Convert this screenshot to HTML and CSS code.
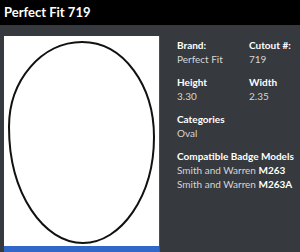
FILE: index.html
```html
<!DOCTYPE html>
<html lang="en">
<head>
    <meta charset="UTF-8">
    <title>Perfect Fit 719</title>
    <link rel="stylesheet" href="styles.css">
</head>
<body>
    <header class="title-bar">Perfect Fit 719</header>

    <main class="content">
        <div class="preview">
            <svg class="shape" viewBox="0 0 155 210" width="155" height="210">
                <path d="M78,6 C120,6 150,50 150,101 C150,160 117,207 79,207 C40,207 5,158 5,91 C5,44 38,6 78,6 Z"
                      fill="none" stroke="#111" stroke-width="2"/>
            </svg>
        </div>

        <div class="details">
            <div class="field">
                <div class="label">Brand:</div>
                <div class="value">Perfect Fit</div>
            </div>
            <div class="field">
                <div class="label">Cutout #:</div>
                <div class="value">719</div>
            </div>
            <div class="field">
                <div class="label">Height</div>
                <div class="value">3.30</div>
            </div>
            <div class="field">
                <div class="label">Width</div>
                <div class="value">2.35</div>
            </div>
            <div class="field wide">
                <div class="label">Categories</div>
                <div class="value">Oval</div>
            </div>
            <div class="field wide">
                <div class="label">Compatible Badge Models</div>
                <div class="value">Smith and Warren <b>M263</b></div>
                <div class="value">Smith and Warren <b>M263A</b></div>
            </div>
        </div>
    </main>
</body>
</html>
```

FILE: styles.css
```css
body {
    margin: 0;
    background-color: #36393e;
    font-family: Lato, 'Open Sans', sans-serif;
    color: #d4d6d9;
    height: 252px;
    overflow: hidden;
}

.title-bar {
    background-color: #000;
    color: #fff;
    height: 25px;
    line-height: 24px;
    padding-left: 4px;
    font-size: 13px;
    font-weight: 700;
}

.content {
    display: flex;
    align-items: flex-start;
    padding: 11px 0 0 4px;
}

.preview {
    width: 155px;
    height: 210px;
    background-color: #fff;
    border-bottom: 6px solid #3167c8;
    border-right: 1px solid #4a4d52;
    flex-shrink: 0;
}

.shape {
    display: block;
}

.details {
    display: grid;
    grid-template-columns: 72px 1fr;
    align-content: start;
    row-gap: 9px;
    padding: 2px 0 0 17px;
    font-size: 10px;
    line-height: 14px;
}

.field.wide {
    grid-column: 1 / span 2;
}

.label {
    color: #fff;
    font-weight: 700;
}

.value b {
    color: #fff;
    font-weight: 700;
}
```
